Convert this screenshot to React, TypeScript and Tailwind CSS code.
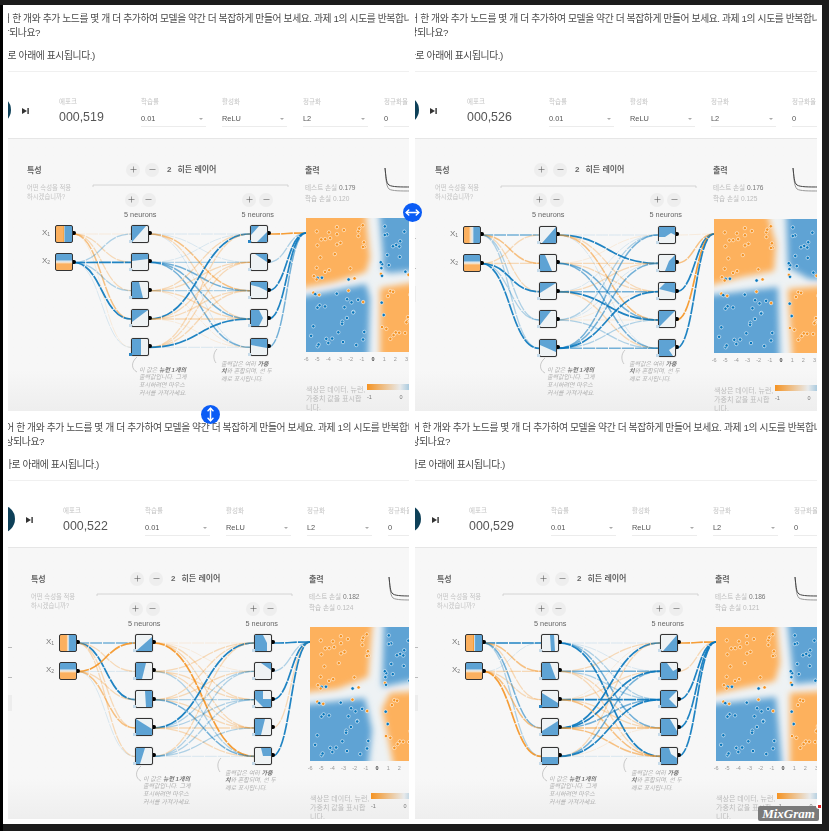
import React from 'react';
import { Plus, Minus, MoveHorizontal, MoveVertical } from 'lucide-react';

const FONT = "[font-family:'Liberation_Sans','Noto_Sans_CJK_KR',sans-serif]";

// + is orange, - is blue, size is the weight of the link
interface PanelData {
  ml: string;
  netTop: string;
  linksTop: string;
  epoch: string;
  test: string;
  train: string;
  x1: string;
  inputs: number[][];
  hidden: number[][];
  output: number[];
  layer1: string[];
  layer2: string[];
  strongBias: number[];
  heat: { tl: string; tr: string; bl: string; br: string };
}

const PANELS: PanelData[] = [
  {
    ml: '-ml-[25px]', netTop: 'mt-0', linksTop: 'top-0', epoch: '000,519', test: '0.179', train: '0.120',
    x1: 'bg-[linear-gradient(90deg,#fbb05f_44%,#f59322_46%,#f5e5d0_50%,#5ea3d4_56%)]',
    inputs: [[1, 2, 2, 3, 1], [-2, -4, -2, -4, -1]],
    hidden: [
      [-1, -1, 3, 2, -1],
      [-1, -2, -3, -3, -3],
      [2, 2, -2, 2, 1],
      [-4, 2, 2, 2, 1],
      [2, 2, 2, -4, -1],
    ],
    output: [4, -2, -4, -4, -3],
    layer1: ['0,0 14,0 0,16', '0,0 16,0 16,5 0,7', '0,0 7,0 11,16 0,16', '0,0 16,0 0,12', '0,0 9,0 9,16 0,16'],
    layer2: ['0,0 8,0 0,9|6,16 16,6 16,16', '4,0 16,0 16,8', '0,0 16,0 16,9 8,5 0,3', '0,0 8,0 12,8 8,16 0,16', '0,0 16,0 16,9 0,6'],
    strongBias: [4, 5],
    heat: {
      tl: '-10,-10 59,-10 64,40 60,54 28,64 -10,71',
      tr: '73,-10 150,-10 150,49 82,55 76,50 77,40',
      bl: '-10,80 30,72 60,66 64,80 62,150 -10,150',
      br: '74,70 150,58 150,150 74,150',
    },
  },
  {
    ml: '-ml-[24px]', netTop: 'mt-px', linksTop: 'top-px', epoch: '000,526', test: '0.176', train: '0.125',
    x1: 'bg-[linear-gradient(90deg,#fbb05f_30%,#f8e3c8_42%,#d9e6ef_55%,#5ea3d4_62%)]',
    inputs: [[-3, 3, 2, -2, -2], [2, 2, -4, -2, -4]],
    hidden: [
      [-1, -4, 2, 3, -1],
      [1, 2, 2, -3, -3],
      [-1, 2, -3, -4, 2],
      [-2, -1, 1, 1, -2],
      [-3, -3, -4, -2, -3],
    ],
    output: [1, 3, -4, 4, -4],
    layer1: ['16,0 16,16 2,16', '0,0 5,0 12,16 0,16', '0,0 16,0 0,10', '0,0 11,0 0,14', '0,0 16,0 16,12 0,5'],
    layer2: ['0,0 16,0 16,8 12,6 6,10 0,10', '16,0 16,16 6,16 10,6', '0,6 6,0 16,0 16,10 8,8', '0,0 16,0 0,16', '0,0 16,0 16,6 10,10 14,16 0,16'],
    strongBias: [],
    heat: {
      tl: '-10,-10 52,-10 62,25 60,52 28,58 -10,68',
      tr: '72,-10 150,-10 150,62 95,60 74,48',
      bl: '-10,77 30,72 64,68 66,150 -10,150',
      br: '74,70 150,64 150,150 79,150',
    },
  },
  {
    ml: '-ml-[21px]', netTop: 'mt-0', linksTop: 'top-0', epoch: '000,522', test: '0.182', train: '0.124',
    x1: 'bg-[linear-gradient(90deg,#fbb05f_40%,#f8e3c8_48%,#d9e6ef_52%,#5ea3d4_60%)]',
    inputs: [[-3, 2, -4, 2, 2], [4, -1, 2, 3, -1]],
    hidden: [
      [1, 1, 2, 2, 4],
      [2, -1, 2, 2, -2],
      [2, 2, -2, 2, -3],
      [-4, -2, -2, 2, 2],
      [2, -2, -2, -2, -1],
    ],
    output: [-4, -2, -4, 2, -4],
    layer1: ['16,2 16,16 0,16', '0,0 10,0 6,16 0,16', '9,0 16,0 16,16 10,16', '0,0 16,10 16,16 0,16', '0,16 0,0 9,0 4,16'],
    layer2: ['0,0 8,0 12,8 12,16 0,16', '6,0 16,0 16,7', '0,0 8,0 8,8 16,8 16,16 8,16 0,8', '0,0 10,0 6,16 0,16', '6,0 16,0 16,8 8,8'],
    strongBias: [],
    heat: {
      tl: '-10,-10 63,-10 58,50 27,62 -10,66',
      tr: '74,-10 150,-10 150,50 100,54 72,60',
      bl: '-10,78 55,71 62,103 57,150 -10,150',
      br: '80,66 150,62 150,150 86,150 72,82',
    },
  },
  {
    ml: '-ml-[22px]', netTop: 'mt-0', linksTop: 'top-0', epoch: '000,529', test: '0.186', train: '0.121',
    x1: 'bg-[linear-gradient(90deg,#fbb05f_44%,#f59322_48%,#d9e6ef_52%,#5ea3d4_60%)]',
    inputs: [[-4, 3, 2, -3, -2], [-1, 2, 2, 3, 4]],
    hidden: [
      [-1, -1, -2, -3, -4],
      [2, -3, -2, 2, 2],
      [1, 2, -4, 2, 3],
      [-4, -4, -3, 3, 3],
      [2, -3, -4, 1, -1],
    ],
    output: [4, 2, -4, -4, -4],
    layer1: ['8,0 12,0 13,16 9,16', '0,0 8,0 14,16 0,16', '0,2 16,12 16,16 0,16', '0,12 16,2 16,16 0,16', '0,9 16,9 16,16 0,16'],
    layer2: ['16,0 16,16 2,16', '0,0 6,0 12,8 16,6 16,16 0,16', '0,0 16,0 8,8 16,16 0,16', '0,0 9,0 16,12 16,16 0,16', '0,16 16,16 16,10 10,6 8,0 0,0'],
    strongBias: [2],
    heat: {
      tl: '-10,-10 60,-10 64,36 59,54 30,60 -10,69',
      tr: '71,-10 150,-10 150,51 100,55 78,57',
      bl: '-10,78 60,70 67,150 -10,150',
      br: '74,66 150,62 150,150 74,150',
    },
  },
];

const COLUMN_X = { input: 73, h1Left: 131, h1Right: 149, h2Left: 250, h2Right: 268, out: 306 };
const rowY = (i: number) => 95 + i * 28.33;
const inputY = (i: number) => 95 + i * 28.5;

// same dots in every panel, only the training state changes
const makePoints = () => {
  let seed = 4711;
  const rand = () => {
    seed = (seed * 1664525 + 1013904223) % 4294967296;
    return seed / 4294967296;
  };
  const points: { x: number; y: number; orange: boolean }[] = [];
  for (let i = 0; i < 120; i++) {
    const sx = i % 2 === 0 ? -1 : 1;
    const sy = i % 4 < 2 ? -1 : 1;
    const dx = 5 + rand() * 57;
    const dy = 5 + rand() * 57;
    let orange = sx === sy;
    if ((dx < 12 || dy < 12) && rand() < 0.3) orange = !orange;
    points.push({ x: 67 + sx * dx, y: 67 + sy * dy, orange });
  }
  return points;
};
const POINTS = makePoints();

const Link = ({ x0, y0, x1, y1, w }: { x0: number; y0: number; x1: number; y1: number; w: number }) => {
  const mid = (x0 + x1) / 2;
  const opacity = [0, 0.13, 0.3, 0.55, 0.9][Math.abs(w)];
  const width = [0, 1, 1.3, 1.5, 1.7][Math.abs(w)];
  return (
    <path
      d={`M${x0},${y0} C${mid},${y0} ${mid},${y1} ${x1},${y1}`}
      fill="none"
      stroke={w > 0 ? '#f59322' : '#0877bd'}
      strokeOpacity={opacity}
      strokeWidth={width}
      strokeDasharray="12 1"
    />
  );
};

const RoundButton = ({ minus }: { minus?: boolean }) => (
  <div className="flex h-[14px] w-[14px] items-center justify-center rounded-full bg-[#eeeeee] text-[#555555]">
    {minus ? <Minus size={9} strokeWidth={1.5} /> : <Plus size={9} strokeWidth={1.5} />}
  </div>
);

const Select = ({ label, value, narrow }: { label: string; value: string; narrow?: boolean }) => (
  <div className={`mr-[16px] shrink-0 pt-[2px] ${narrow ? 'w-[50px]' : 'w-[65px]'}`}>
    <div className="h-[8px] text-[6.5px] leading-[8px] text-[#c4c4c4]">{label}</div>
    <div className="mt-[7px] flex h-[12px] items-center justify-between text-[7.4px] text-[#555555]">
      <span>{value}</span>
      {!narrow && <span className="mr-[3px] h-0 w-0 border-x-[2px] border-t-[2px] border-x-transparent border-t-[#aaaaaa]" />}
    </div>
    <div className="mt-[1px] h-[1.5px] bg-[#ececec]" />
  </div>
);

const HeatNode = ({ pattern, strong }: { pattern: string; strong: boolean }) => (
  <div className="relative h-[18px] w-[18px] rounded-[2px] border-[1.5px] border-[#333333] bg-[#eef2f4] shadow-[0_0_1px_#888]">
    <svg viewBox="0 0 16 16" className="h-full w-full">
      {pattern.split('|').map((pts, i) => (
        <polygon key={i} points={pts} fill="#5ea3d4" />
      ))}
    </svg>
    <div className="absolute -right-[3.5px] top-[5.5px] h-[4px] w-[2.5px] rounded-r-full bg-black" />
    <div className={`absolute -left-[3.5px] -bottom-[1px] h-[3px] w-[3px] ${strong ? 'bg-[#2a85c4]' : 'bg-[#c6dbea]'}`} />
  </div>
);

const Heatmap = ({ panel, id }: { panel: PanelData; id: number }) => (
  <svg width={134} height={134} viewBox="0 0 134 134" className="block">
    <defs>
      <filter id={`soft-${id}`} x="-10%" y="-10%" width="120%" height="120%">
        <feGaussianBlur stdDeviation="3" />
      </filter>
      <clipPath id={`clip-${id}`}>
        <rect width="134" height="134" />
      </clipPath>
    </defs>
    <rect width="134" height="134" fill="#eef2f4" />
    <g clipPath={`url(#clip-${id})`}>
      <g filter={`url(#soft-${id})`}>
        <polygon points={panel.heat.tl} fill="#fdb15d" />
        <polygon points={panel.heat.tr} fill="#5ea3d4" />
        <polygon points={panel.heat.bl} fill="#5ea3d4" />
        <polygon points={panel.heat.br} fill="#fdb15d" />
      </g>
    </g>
    {POINTS.map((p, i) => (
      <circle key={i} cx={p.x} cy={p.y} r={1.7} fill={p.orange ? '#f59322' : '#0877bd'} stroke="#ffffff" strokeOpacity={0.8} strokeWidth={0.7} />
    ))}
  </svg>
);

const LossChart = () => (
  <svg width={28} height={30} viewBox="0 0 28 30" className="shrink-0">
    <path d="M1,2 C2,12 2,20 5,23 C8,25 16,25 28,25" fill="none" stroke="#999999" strokeWidth={1} />
    <path d="M1,2 C2,10 2,17 5,19 C8,21 16,21 28,21" fill="none" stroke="#444444" strokeWidth={1} />
  </svg>
);

const Panel = ({ panel, id }: { panel: PanelData; id: number }) => (
  <div className="overflow-hidden">
    <div className={`w-[480px] blur-[0.55px] ${panel.ml} ${FONT}`}>
      <div className="pt-[7px] text-[9.8px] leading-[13.5px] tracking-[-0.4px] whitespace-nowrap text-[#4a4a4a]">
        <div className="ml-[1px]">레이어 한 개와 추가 노드를 몇 개 더 추가하여 모델을 약간 더 복잡하게 만들어 보세요. 과제 1의 시도를 반복합니다.</div>
        <div className="ml-[9px]">향상되나요?</div>
        <div className="mt-[10px] ml-[16px]">바로 아래에 표시됩니다.)</div>
      </div>
      <div className="mt-[8px] h-px bg-[#f0f0f0]" />

      <div className="mt-[24px] flex h-[42px] items-start">
        <div className="h-[28px] w-[28px] shrink-0 rounded-full bg-[#0e4058]" />
        <svg width={7} height={6} viewBox="0 0 7 6" className="ml-[11px] mt-[12px] shrink-0">
          <polygon points="0,0 5,3 0,6" fill="#333333" />
          <rect x="5.4" y="0" width="1.4" height="6" fill="#333333" />
        </svg>
        <div className="ml-[30px] w-[82px] shrink-0 pt-[2px]">
          <div className="h-[8px] text-[6.5px] leading-[8px] text-[#c4c4c4]">에포크</div>
          <div className="mt-[4px] text-[12.4px] leading-[14px] text-[#555555]">{panel.epoch}</div>
        </div>
        <Select label="학습률" value="0.01" />
        <Select label="활성화" value="ReLU" />
        <Select label="정규화" value="L2" />
        <Select label="정규화율" value="0" narrow />
      </div>

      <div className="relative h-[273px] border-t border-[#e6e6e6] bg-gradient-to-b from-[#f7f7f7] from-85% to-[#eeeeee]">
        <svg width={460} height={273} viewBox="0 0 460 273" className={`absolute left-[17px] ${panel.linksTop}`}>
          {panel.inputs.map((row, i) =>
            row.map((w, j) => <Link key={`a${i}${j}`} x0={COLUMN_X.input} y0={inputY(i)} x1={COLUMN_X.h1Left} y1={rowY(j)} w={w} />)
          )}
          {panel.hidden.map((row, i) =>
            row.map((w, j) => <Link key={`b${i}${j}`} x0={COLUMN_X.h1Right} y0={rowY(i)} x1={COLUMN_X.h2Left} y1={rowY(j)} w={w} />)
          )}
          {panel.output.map((w, i) => (
            <Link key={`c${i}`} x0={COLUMN_X.h2Right} y0={rowY(i)} x1={COLUMN_X.out} y1={94} w={w} />
          ))}
          <path d="M137,218 C131,223 131,230 137,233" fill="none" stroke="#aaaaaa" strokeWidth={0.6} />
          <path d="M217,210 C213,214 213,220 216,224" fill="none" stroke="#aaaaaa" strokeWidth={0.6} />
          <path d="M93,48 L93,46 L288,46 L288,48" fill="none" stroke="#cccccc" strokeWidth={0.8} />
        </svg>

        {/* clipped edge of the regularisation column */}
        <div className="absolute left-[21px] top-[99px] h-px w-[4px] bg-[#bbbbbb]" />
        <div className="absolute left-[21px] top-[129px] h-px w-[4px] bg-[#bbbbbb]" />
        <div className="absolute left-[21px] top-[147px] h-[16px] w-[4px] bg-[#ededed]" />

        <div className="relative flex h-[79px] pl-[44px]">
          <div className="w-[66px] shrink-0 pt-[27px]">
            <div className="text-[8px] font-bold leading-[10px] text-[#666666]">특성</div>
            <div className="mt-[7px] text-[6.3px] leading-[9px] text-[#c4c4c4]">
              어떤 속성을 적용
              <br />
              하시겠습니까?
            </div>
          </div>
          <div className="w-[212px] shrink-0">
            <div className="flex items-center gap-[5px] pl-[33px] pt-[24px] text-[8px] leading-[14px] text-[#666666]">
              <RoundButton />
              <RoundButton minus />
              <span className="ml-[3px] font-bold">2</span>
              <span className="ml-[1px] font-bold">히든 레이어</span>
            </div>
            <div className="mt-[16px] flex gap-[23px]">
              {[0, 1].map(i => (
                <div key={i} className="flex w-[96px] flex-col items-center">
                  <div className="flex gap-[3px]">
                    <RoundButton />
                    <RoundButton minus />
                  </div>
                  <div className="mt-[4px] text-[7.3px] leading-[8px] text-[#666666]">5 neurons</div>
                </div>
              ))}
            </div>
          </div>
          <div className="flex shrink-0 pt-[27px]">
            <div className="w-[79px]">
              <div className="text-[8px] font-bold leading-[10px] text-[#666666]">출력</div>
              <div className="mt-[6px] text-[6.6px] leading-[11px] text-[#bcbcbc]">
                테스트 손실 <span className="text-[#777777]">{panel.test}</span>
                <br />
                학습 손실 {panel.train}
              </div>
            </div>
            <LossChart />
          </div>
        </div>

        <div className={`relative flex items-start pl-[72px] ${panel.netTop}`}>
          <div className="mt-[7px] flex w-[18px] shrink-0 flex-col gap-[10.5px]">
            <div className="relative">
              <span className="absolute -left-[13px] top-[3px] text-[8px] leading-[10px] text-[#777777]">X<sub className="text-[5px]">1</sub></span>
              <div className={`relative h-[18px] w-[18px] rounded-[2px] border-[1.5px] border-[#333333] ${panel.x1}`}>
                <div className="absolute -right-[3.5px] top-[5.5px] h-[4px] w-[2.5px] rounded-r-full bg-black" />
              </div>
            </div>
            <div className="relative">
              <span className="absolute -left-[13px] top-[3px] text-[8px] leading-[10px] text-[#777777]">X<sub className="text-[5px]">2</sub></span>
              <div className="relative h-[18px] w-[18px] rounded-[2px] border-[1.5px] border-[#333333] bg-[linear-gradient(180deg,#5ea3d4_35%,#d9e6ef_45%,#f8dfc0_55%,#fbb05f_62%)]">
                <div className="absolute -right-[3.5px] top-[5.5px] h-[4px] w-[2.5px] rounded-r-full bg-black" />
              </div>
            </div>
          </div>
          <div className="ml-[58px] mt-[7px] flex w-[18px] shrink-0 flex-col gap-[10.33px]">
            {panel.layer1.map((p, i) => <HeatNode key={i} pattern={p} strong={panel.strongBias.includes(i)} />)}
          </div>
          <div className="ml-[101px] mt-[7px] flex w-[18px] shrink-0 flex-col gap-[10.33px]">
            {panel.layer2.map((p, i) => <HeatNode key={i} pattern={p} strong={panel.strongBias.includes(i + 5)} />)}
          </div>
          <div className="ml-[38px] w-[134px] shrink-0">
            <Heatmap panel={panel} id={id} />
            <div className="-ml-[5.5px] mt-[3px] flex h-[10px] text-[5.5px] leading-[8px] text-[#999999]">
              {[-6, -5, -4, -3, -2, -1, 0, 1, 2, 3, 4, 5, 6].map(v => (
                <span key={v} className={`w-[11.17px] shrink-0 text-center ${v === 0 ? 'font-bold text-[#444444]' : ''}`}>{v}</span>
              ))}
            </div>
            <div className="mt-[20px] flex">
              <div className="w-[61px] shrink-0 text-[7px] leading-[9.3px] text-[#bcbcbc]">
                색상은 데이터, 뉴런,
                <br />
                가중치 값을 표시합
                <br />
                니다.
              </div>
              <div className="w-[66px] shrink-0">
                <div className="-mt-[1px] h-[6px] bg-[linear-gradient(90deg,#f59322,#e8eaeb_50%,#0877bd)]" />
                <div className="mt-[3px] flex justify-between text-[5.5px] leading-[8px] text-[#777777]">
                  <span>-1</span>
                  <span>0</span>
                  <span>1</span>
                </div>
              </div>
            </div>
          </div>
        </div>

        <div className="absolute left-[156px] top-[228px] text-[6px] italic leading-[7.7px] text-[#b0b0b0]">
          이 값은 <b className="text-[#777777]">뉴런 1개의</b>
          <br />
          출력값입니다. 그게
          <br />
          표시하려면 마우스
          <br />
          커서를 가져가세요.
        </div>
        <div className="absolute left-[238px] top-[222px] text-[6px] italic leading-[7.7px] text-[#b0b0b0]">
          출력값은 여러 <b className="text-[#777777]">가중</b>
          <br />
          <b className="text-[#777777]">치</b>와 혼합되며, 선 두
          <br />
          께로 표시됩니다.
        </div>
      </div>
    </div>
  </div>
);

export default function App() {
  return (
    <div className="relative h-[831px] w-[829px] overflow-hidden bg-[#1c1c1c] pt-[5px]">
      <div className="ml-[3px] grid h-[819px] w-[819px] grid-cols-[401px_402px] grid-rows-[406px_405px] gap-x-[6px] gap-y-[3px] bg-white pl-[5px]">
        {PANELS.map((panel, i) => <Panel key={i} panel={panel} id={i} />)}
      </div>
      <div className="absolute bottom-0 left-0 top-[5px] w-[3px] bg-black" />

      <div className="absolute left-[403px] top-[203px] flex h-[19px] w-[19px] items-center justify-center rounded-full bg-[#0b5cf5] text-white">
        <MoveHorizontal size={15} strokeWidth={2.4} />
      </div>
      <div className="absolute left-[201px] top-[405px] flex h-[19px] w-[19px] items-center justify-center rounded-full bg-[#0b5cf5] text-white">
        <MoveVertical size={15} strokeWidth={2.4} />
      </div>

      <div className="absolute left-[758px] top-[806px] flex h-[15px] w-[61px] items-center justify-center rounded-[2px] bg-[#7a7a7a] text-[13px] font-bold italic leading-none text-white [font-family:'Liberation_Serif',serif]">
        MixGram
      </div>
      <div className="absolute left-[816px] top-[803px] flex h-[6px] w-[6px] items-center justify-center rounded-full bg-white">
        <div className="h-[3px] w-[3px] bg-[#e02020]" />
      </div>
    </div>
  );
}
